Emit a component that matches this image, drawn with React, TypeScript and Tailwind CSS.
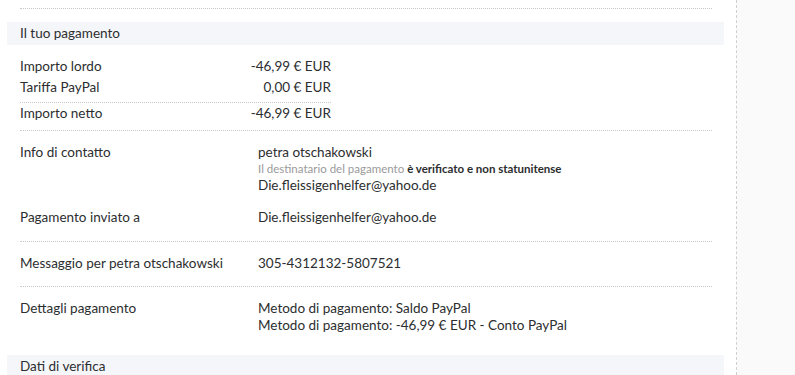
const font = { fontFamily: "Lato, 'Noto Sans', sans-serif" };

function Riga({ label, children }: { label: string; children: React.ReactNode }) {
  return (
    <div className="flex pl-[13px] text-[13.5px] leading-[17px]">
      <div className="w-[238px] shrink-0">{label}</div>
      <div className="whitespace-nowrap">{children}</div>
    </div>
  );
}

function Intestazione({ titolo }: { titolo: string }) {
  return (
    <div className="h-[23px] flex items-center pl-[13px] bg-[#f5f6fa] text-[13.5px]">{titolo}</div>
  );
}

const Puntini = ({ className = "" }: { className?: string }) => (
  <div className={`ml-[13px] border-t border-dotted border-[#c8c8c8] ${className}`} />
);

function Importo({ label, valore }: { label: string; valore: string }) {
  return (
    <div className="flex pl-[13px]">
      <div className="flex-1">{label}</div>
      <div className="whitespace-nowrap">{valore}</div>
    </div>
  );
}

export default function App() {
  return (
    <div className="flex h-[375px] overflow-hidden bg-white text-[#2c2e2f]" style={font}>
      <div className="w-[737px] shrink-0 border-r border-dashed border-[#cfcfcf] pl-[7px] pr-[12px]">
        <div className="h-[8px]" />
        <Puntini className="mr-[12px]" />

        <div className="mt-[13px]">
          <Intestazione titolo="Il tuo pagamento" />
        </div>

        <div className="mt-[11px] w-[324px] text-[13.5px] leading-[21px]">
          <Importo label="Importo lordo" valore="-46,99 € EUR" />
          <Importo label="Tariffa PayPal" valore="0,00 € EUR" />
          <Puntini className="mt-[4px]" />
          <Importo label="Importo netto" valore="-46,99 € EUR" />
        </div>
        <Puntini className="mt-[6px] mr-[12px]" />

        <div className="mt-[13px]">
          <Riga label="Info di contatto">
            <div>petra otschakowski</div>
            <div className="text-[11.5px] leading-[16px] text-[#9a9a9a]">
              Il destinatario del pagamento{" "}
              <span className="font-bold text-[#2c2e2f]">è verificato e non statunitense</span>
            </div>
            <div>Die.fleissigenhelfer@yahoo.de</div>
          </Riga>
        </div>

        <div className="mt-[15px]">
          <Riga label="Pagamento inviato a">Die.fleissigenhelfer@yahoo.de</Riga>
        </div>
        <Puntini className="mt-[15px] mr-[12px]" />

        <div className="mt-[13px]">
          <Riga label="Messaggio per petra otschakowski">305-4312132-5807521</Riga>
        </div>
        <Puntini className="mt-[14px] mr-[12px]" />

        <div className="mt-[13px]">
          <Riga label="Dettagli pagamento">
            <div>Metodo di pagamento: Saldo PayPal</div>
            <div>Metodo di pagamento: -46,99 € EUR - Conto PayPal</div>
          </Riga>
        </div>

        <div className="mt-[21px]">
          <Intestazione titolo="Dati di verifica" />
        </div>
      </div>
      <div className="flex-1 bg-[#fafafa]" />
    </div>
  );
}
